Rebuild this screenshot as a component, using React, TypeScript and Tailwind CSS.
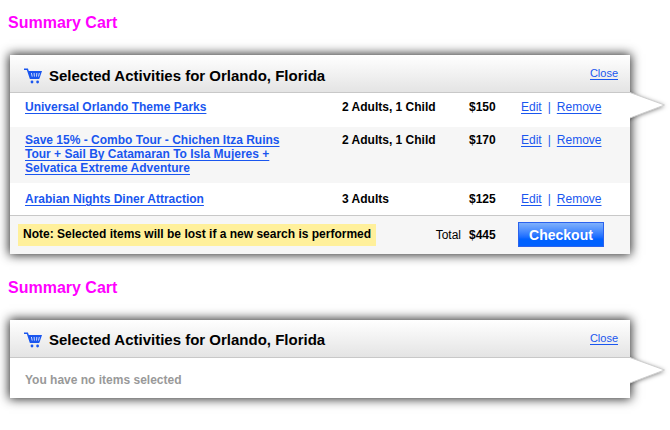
/**
 * @component App
 * @description Summary cart panels - one with selected activities, one empty
 */
import React from 'react';

interface CartItem {
  id: number;
  title: string;
  guests: string;
  price: string;
}

const items: CartItem[] = [
  { id: 1, title: 'Universal Orlando Theme Parks', guests: '2 Adults, 1 Child', price: '$150' },
  {
    id: 2,
    title: 'Save 15% - Combo Tour - Chichen Itza Ruins Tour + Sail By Catamaran To Isla Mujeres + Selvatica Extreme Adventure',
    guests: '2 Adults, 1 Child',
    price: '$170',
  },
  { id: 3, title: 'Arabian Nights Diner Attraction', guests: '3 Adults', price: '$125' },
];

const rowStyles = [
  '[&>td]:pt-[7px] [&>td]:pb-[13px]',
  'bg-[#f6f6f6] [&>td]:pt-[6px] [&>td]:pb-[8px]',
  '[&>td]:pt-[9px] [&>td]:pb-[9px]',
];

const CartIcon: React.FC = () => (
  <svg width="18" height="16" viewBox="0 0 18 16" fill="none" stroke="#1a56ef" aria-hidden="true">
    <path d="M0 1.2H3.4L6.4 10.2H15" strokeWidth="1.5" />
    <path d="M4 3H18L15.4 10.8H6.4Z" fill="#1a56ef" stroke="none" />
    <path d="M7.4 5L8.2 8.6M10.1 5L10.4 8.6M12.8 5L12.5 8.6M15.3 5L14.5 8.6" stroke="#dfe7fb" strokeWidth="0.9" />
    <circle cx="8" cy="14" r="1.4" fill="#1a56ef" stroke="none" />
    <circle cx="13.6" cy="14" r="1.4" fill="#1a56ef" stroke="none" />
  </svg>
);

const CartPanel: React.FC<{ children: React.ReactNode }> = ({ children }) => (
  <section className="relative ml-0.5 mr-8 bg-white shadow-[0_0_10px_1px_rgba(0,0,0,0.85)]">
    <header className="flex h-[38px] items-center border-b border-[#c8c8c8] bg-linear-to-b from-white to-[#e4e4e4] pl-3.5 pr-3">
      <div className="flex flex-1 items-center gap-[7px] pt-1">
        <CartIcon />
        <h3 className="text-[15px] leading-5 font-bold">Selected Activities for Orlando, Florida</h3>
      </div>
      <a href="#close" className="border-b border-[#1a56ef] text-[11px] leading-3 text-[#1a56ef]">
        Close
      </a>
    </header>
    {children}
    {/* Arrow on the right edge, clipped so its shadow stays outside the panel */}
    <svg
      className="absolute left-full top-[37px] overflow-visible [clip-path:inset(-10px_-10px_-10px_0)]"
      width="36"
      height="27"
      viewBox="0 0 36 27"
      aria-hidden="true"
    >
      <path
        className="drop-shadow-[0_1px_2px_rgba(0,0,0,0.5)]"
        d="M-6 0.5H0L35 13L0 26H-6Z"
        fill="#fff"
      />
      <path d="M0 0.5L34.5 13L0 26" fill="none" stroke="#cfcfcf" strokeWidth="1" />
    </svg>
  </section>
);

const App: React.FC = () => {
  return (
    <main className="px-2 pt-[13px] pb-8 font-['Liberation_Sans',Arial,sans-serif] text-[12px] leading-[14px] text-black">
      <h2 className="mb-[22px] text-[16px] leading-5 font-bold text-[#f0f]">Summary Cart</h2>
      <CartPanel>
        <table className="w-full table-fixed border-collapse text-left">
          <colgroup>
            <col />
            <col className="w-[127px]" />
            <col className="w-[49px]" />
            <col className="w-28" />
          </colgroup>
          <tbody>
            {items.map((item, index) => (
              <tr key={item.id} className={`align-top ${rowStyles[index]}`}>
                <td className="pl-[15px] pr-14 font-bold">
                  <a href="#activity" className="text-[#1a56ef] underline underline-offset-2">
                    {item.title}
                  </a>
                </td>
                <td className="font-bold">{item.guests}</td>
                <td className="font-bold">{item.price}</td>
                <td className="pl-[3px] text-[#1a56ef]">
                  <a href="#edit" className="underline underline-offset-2">Edit</a>
                  <span className="mx-1.5">|</span>
                  <a href="#remove" className="underline underline-offset-2">Remove</a>
                </td>
              </tr>
            ))}
          </tbody>
          <tfoot>
            <tr className="h-[38px] border-t border-[#c8c8c8] bg-[#f6f6f6]">
              <td colSpan={2} className="pl-2 pr-2">
                <div className="flex items-center justify-between">
                  <p className="bg-[#fff09b] px-[5px] pt-[3px] pb-[5px] font-bold">
                    Note: Selected items will be lost if a new search is performed
                  </p>
                  <span>Total</span>
                </div>
              </td>
              <td className="font-bold">$445</td>
              <td>
                <button
                  type="button"
                  className="block h-[25px] w-[86px] border border-[#2a62ee] bg-linear-to-b from-[#7fb0fb] to-[#0061ff] to-70% text-[14px] leading-5 font-bold text-white"
                >
                  Checkout
                </button>
              </td>
            </tr>
          </tfoot>
        </table>
      </CartPanel>

      <h2 className="mt-6 mb-[22px] text-[16px] leading-5 font-bold text-[#f0f]">Summary Cart</h2>
      <CartPanel>
        <p className="px-[15px] pt-[15px] pb-[11px] font-bold text-[#999]">You have no items selected</p>
      </CartPanel>
    </main>
  );
};

export default App;
